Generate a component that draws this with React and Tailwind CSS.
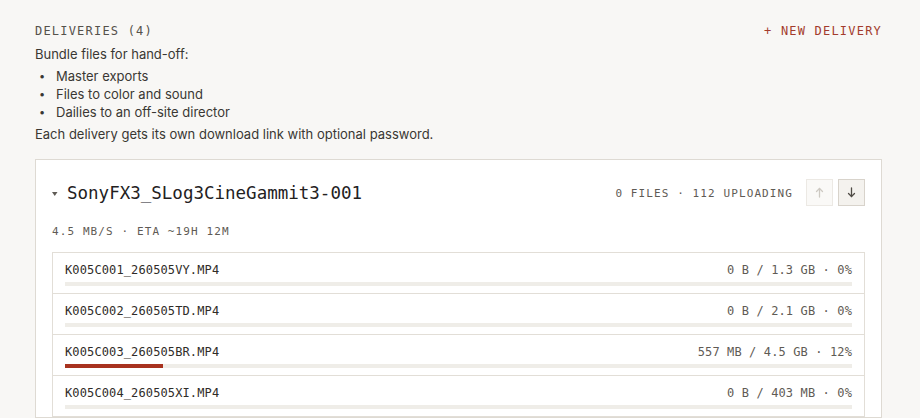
import React from "react";

const MONO = "font-['DejaVu_Sans_Mono','Liberation_Mono',monospace]";

const files = [
  { name: "K005C001_260505VY.MP4", done: "0 B", total: "1.3 GB", pct: 0 },
  { name: "K005C002_260505TD.MP4", done: "0 B", total: "2.1 GB", pct: 0 },
  { name: "K005C003_260505BR.MP4", done: "557 MB", total: "4.5 GB", pct: 12.4, label: 12 },
  { name: "K005C004_260505XI.MP4", done: "0 B", total: "403 MB", pct: 0 },
];

const Arrow = ({ up, color }) => (
  <svg width="9" height="11" viewBox="0 0 9 11" fill="none" stroke={color} strokeWidth="1.3" strokeLinecap="round" strokeLinejoin="round">
    {up ? (
      <>
        <path d="M4.5 10V1.5" />
        <path d="M1.5 4.5L4.5 1.5L7.5 4.5" />
      </>
    ) : (
      <>
        <path d="M4.5 1V9.5" />
        <path d="M1.5 6.5L4.5 9.5L7.5 6.5" />
      </>
    )}
  </svg>
);

const FileRow = ({ file, first }) => (
  <div className={`px-3 pt-[9px] pb-[7px] ${first ? "" : "border-t border-[#e2ded7]"}`}>
    <div className={`flex justify-between text-[12px] leading-4 text-[#2f2c28] tracking-[0.01em] ${MONO}`}>
      <span>{file.name}</span>
      <span className="text-[#5f5b55]">
        {file.done} / {file.total} · {file.label ?? file.pct}%
      </span>
    </div>
    <div className="mt-1 h-1 bg-[#efede8]">
      <div className="h-1 bg-[#a8321f]" style={{ width: `${file.pct}%` }} />
    </div>
  </div>
);

export default function App() {
  return (
    <div className="min-h-screen bg-[#f8f7f5] pl-[35px] pr-[38px] pt-[23px] font-['Inter',sans-serif] text-[#2f2c28]">
      <div className={`flex justify-between text-[12px] leading-4 tracking-[0.1em] ${MONO}`}>
        <span className="text-[#55514b]">DELIVERIES (4)</span>
        <span className="text-[#a33b2c]">+ NEW DELIVERY</span>
      </div>

      <p className="mt-[6px] text-[13px] leading-[18px] text-[#3a3733]">Bundle files for hand-off:</p>
      <ul className="mt-1 text-[13px] leading-[18px] text-[#3a3733]">
        {["Master exports", "Files to color and sound", "Dailies to an off-site director"].map((t) => (
          <li key={t} className="flex">
            <span className="w-[21px] pl-[4px] text-[11px]">•</span>
            <span>{t}</span>
          </li>
        ))}
      </ul>
      <p className="mt-1 text-[13px] leading-[18px] text-[#3a3733]">
        Each delivery gets its own download link with optional password.
      </p>

      <div className="mt-4 border border-[#dedad3] bg-white px-4 pt-[19px]">
        <div className="flex h-[27px] items-center justify-between">
          <div className="flex items-center">
            <svg width="15" height="8" viewBox="0 0 15 8" className="mt-[2px]">
              <path d="M0 2H5.5L2.75 6Z" fill="#5f5b55" />
            </svg>
            <span className={`text-[17.5px] leading-6 text-[#23211e] ${MONO}`}>
              SonyFX3_SLog3CineGammit3-001
            </span>
          </div>
          <div className="flex items-center">
            <span className={`mr-[13px] pt-[3px] text-[11px] tracking-[0.1em] text-[#5f5b55] ${MONO}`}>
              0 FILES · 112 UPLOADING
            </span>
            <button className="flex h-[27px] w-[27px] items-center justify-center border border-[#ece9e4] bg-[#faf9f7]">
              <Arrow up color="#cdc9c2" />
            </button>
            <button className="ml-[5px] flex h-[27px] w-[27px] items-center justify-center border border-[#d8d3cb] bg-[#f4f2ee]">
              <Arrow color="#4f4b45" />
            </button>
          </div>
        </div>

        <div className={`mt-[18px] text-[11px] leading-4 tracking-[0.1em] text-[#5f5b55] ${MONO}`}>
          4.5 MB/S · ETA ~19H 12M
        </div>

        <div className="mt-3 border border-[#e2ded7]">
          {files.map((f, i) => (
            <FileRow key={f.name} file={f} first={i === 0} />
          ))}
        </div>
      </div>
    </div>
  );
}
